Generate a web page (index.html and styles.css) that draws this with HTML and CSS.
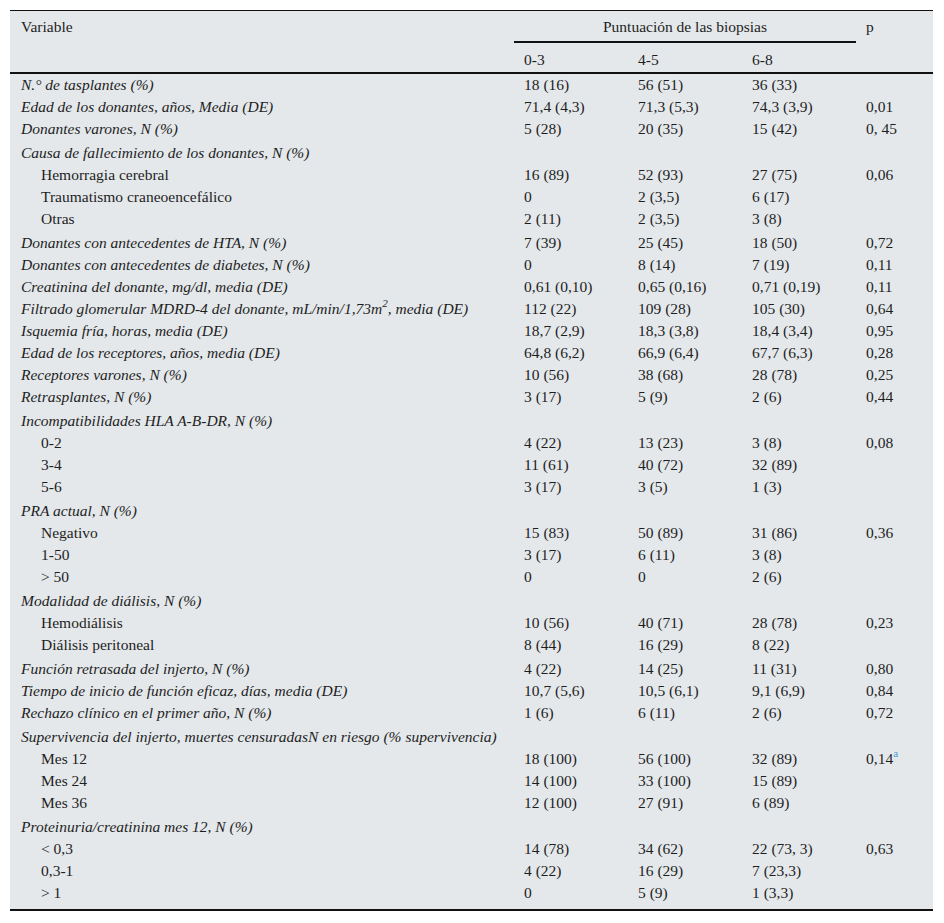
FILE: index.html
```html
<!DOCTYPE html>
<html lang="es">
<head>
<meta charset="utf-8">
<title>Tabla</title>
<link rel="stylesheet" href="styles.css">
</head>
<body>
<table class="tbl">
  <colgroup>
    <col class="c-var"><col class="c-num"><col class="c-num"><col class="c-num"><col class="c-p">
  </colgroup>
  <thead>
    <tr class="h1">
      <th rowspan="2" class="hvar">Variable</th>
      <th colspan="3" class="hgroup"><span>Puntuación de las biopsias</span></th>
      <th class="hp">p</th>
    </tr>
    <tr class="h2">
      <th>0-3</th><th>4-5</th><th>6-8</th><th class="hp2"></th>
    </tr>
  </thead>
  <tbody>
    <tr><td class="lab">N.° de tasplantes (%)</td><td>18 (16)</td><td>56 (51)</td><td>36 (33)</td><td></td></tr>
    <tr><td class="lab">Edad de los donantes, años, Media (DE)</td><td>71,4 (4,3)</td><td>71,3 (5,3)</td><td>74,3 (3,9)</td><td>0,01</td></tr>
    <tr><td class="lab">Donantes varones, N (%)</td><td>5 (28)</td><td>20 (35)</td><td>15 (42)</td><td>0, 45</td></tr>
    <tr class="gap"><td class="lab">Causa de fallecimiento de los donantes, N (%)</td><td></td><td></td><td></td><td></td></tr>
    <tr><td class="sub">Hemorragia cerebral</td><td>16 (89)</td><td>52 (93)</td><td>27 (75)</td><td>0,06</td></tr>
    <tr><td class="sub">Traumatismo craneoencefálico</td><td>0</td><td>2 (3,5)</td><td>6 (17)</td><td></td></tr>
    <tr><td class="sub">Otras</td><td>2 (11)</td><td>2 (3,5)</td><td>3 (8)</td><td></td></tr>
    <tr class="gap"><td class="lab">Donantes con antecedentes de HTA, N (%)</td><td>7 (39)</td><td>25 (45)</td><td>18 (50)</td><td>0,72</td></tr>
    <tr><td class="lab">Donantes con antecedentes de diabetes, N (%)</td><td>0</td><td>8 (14)</td><td>7 (19)</td><td>0,11</td></tr>
    <tr><td class="lab">Creatinina del donante, mg/dl, media (DE)</td><td>0,61 (0,10)</td><td>0,65 (0,16)</td><td>0,71 (0,19)</td><td>0,11</td></tr>
    <tr><td class="lab">Filtrado glomerular MDRD-4 del donante, mL/min/1,73m<sup>2</sup>, media (DE)</td><td>112 (22)</td><td>109 (28)</td><td>105 (30)</td><td>0,64</td></tr>
    <tr><td class="lab">Isquemia fría, horas, media (DE)</td><td>18,7 (2,9)</td><td>18,3 (3,8)</td><td>18,4 (3,4)</td><td>0,95</td></tr>
    <tr><td class="lab">Edad de los receptores, años, media (DE)</td><td>64,8 (6,2)</td><td>66,9 (6,4)</td><td>67,7 (6,3)</td><td>0,28</td></tr>
    <tr><td class="lab">Receptores varones, N (%)</td><td>10 (56)</td><td>38 (68)</td><td>28 (78)</td><td>0,25</td></tr>
    <tr><td class="lab">Retrasplantes, N (%)</td><td>3 (17)</td><td>5 (9)</td><td>2 (6)</td><td>0,44</td></tr>
    <tr class="gap"><td class="lab">Incompatibilidades HLA A-B-DR, N (%)</td><td></td><td></td><td></td><td></td></tr>
    <tr><td class="sub">0-2</td><td>4 (22)</td><td>13 (23)</td><td>3 (8)</td><td>0,08</td></tr>
    <tr><td class="sub">3-4</td><td>11 (61)</td><td>40 (72)</td><td>32 (89)</td><td></td></tr>
    <tr><td class="sub">5-6</td><td>3 (17)</td><td>3 (5)</td><td>1 (3)</td><td></td></tr>
    <tr class="gap"><td class="lab">PRA actual, N (%)</td><td></td><td></td><td></td><td></td></tr>
    <tr><td class="sub">Negativo</td><td>15 (83)</td><td>50 (89)</td><td>31 (86)</td><td>0,36</td></tr>
    <tr><td class="sub">1-50</td><td>3 (17)</td><td>6 (11)</td><td>3 (8)</td><td></td></tr>
    <tr><td class="sub">&gt; 50</td><td>0</td><td>0</td><td>2 (6)</td><td></td></tr>
    <tr class="gap"><td class="lab">Modalidad de diálisis, N (%)</td><td></td><td></td><td></td><td></td></tr>
    <tr><td class="sub">Hemodiálisis</td><td>10 (56)</td><td>40 (71)</td><td>28 (78)</td><td>0,23</td></tr>
    <tr><td class="sub">Diálisis peritoneal</td><td>8 (44)</td><td>16 (29)</td><td>8 (22)</td><td></td></tr>
    <tr class="gap"><td class="lab">Función retrasada del injerto, N (%)</td><td>4 (22)</td><td>14 (25)</td><td>11 (31)</td><td>0,80</td></tr>
    <tr><td class="lab">Tiempo de inicio de función eficaz, días, media (DE)</td><td>10,7 (5,6)</td><td>10,5 (6,1)</td><td>9,1 (6,9)</td><td>0,84</td></tr>
    <tr><td class="lab">Rechazo clínico en el primer año, N (%)</td><td>1 (6)</td><td>6 (11)</td><td>2 (6)</td><td>0,72</td></tr>
    <tr class="gap"><td class="lab" colspan="4">Supervivencia del injerto, muertes censuradasN en riesgo (% supervivencia)</td><td></td></tr>
    <tr><td class="sub">Mes 12</td><td>18 (100)</td><td>56 (100)</td><td>32 (89)</td><td>0,14<sup class="ref">a</sup></td></tr>
    <tr><td class="sub">Mes 24</td><td>14 (100)</td><td>33 (100)</td><td>15 (89)</td><td></td></tr>
    <tr><td class="sub">Mes 36</td><td>12 (100)</td><td>27 (91)</td><td>6 (89)</td><td></td></tr>
    <tr class="gap"><td class="lab">Proteinuria/creatinina mes 12, N (%)</td><td></td><td></td><td></td><td></td></tr>
    <tr><td class="sub">&lt; 0,3</td><td>14 (78)</td><td>34 (62)</td><td>22 (73, 3)</td><td>0,63</td></tr>
    <tr><td class="sub">0,3-1</td><td>4 (22)</td><td>16 (29)</td><td>7 (23,3)</td><td></td></tr>
    <tr class="last"><td class="sub">&gt; 1</td><td>0</td><td>5 (9)</td><td>1 (3,3)</td><td></td></tr>
  </tbody>
</table>
</body>
</html>
```

FILE: styles.css
```css
html, body {
  margin: 0;
  padding: 0;
  background: #ffffff;
}

body {
  padding: 10px 0 0 10px;
  font-family: "Liberation Serif", "Times New Roman", serif;
  font-size: 15.5px;
  color: #1e1e1e;
}

.tbl {
  width: 923px;
  border-collapse: collapse;
  table-layout: fixed;
  background: #e4e8eb;
  border-top: 1px solid #111;
  border-bottom: 2px solid #111;
}

.c-var { width: 504px; }
.c-num { width: 114px; }
.c-p { width: 77px; }

th {
  font-weight: normal;
  text-align: left;
  vertical-align: top;
  padding: 0 0 0 10px;
  line-height: 17px;
}

.h1 th {
  height: 31px;
  padding-top: 7px;
  box-sizing: border-box;
}

.h1 .hvar {
  padding-left: 11px;
}

.h1 .hgroup {
  padding: 7px 0 0 0;
  text-align: center;
  border-bottom: 2px solid #111;
}

.h2 {
  border-bottom: 2px solid #111;
}

.h2 th {
  height: 31px;
  padding-top: 8px;
  box-sizing: border-box;
}

td {
  padding: 0 0 0 10px;
  height: 22px;
  line-height: 22px;
  vertical-align: top;
  white-space: nowrap;
}

td.lab {
  font-style: italic;
  padding-left: 11px;
}

td.sub {
  padding-left: 31px;
}

tr.gap td {
  padding-top: 2px;
}

tr.last td {
  padding-bottom: 5px;
}

sup {
  font-size: 11px;
  line-height: 0;
  vertical-align: 7px;
}

sup.ref {
  color: #4d9ad6;
}
```
